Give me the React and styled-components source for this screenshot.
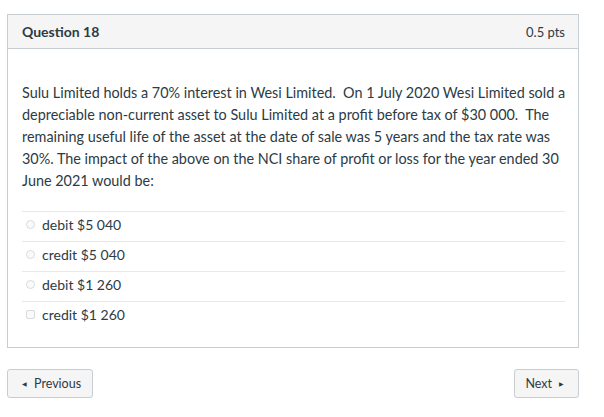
import React from 'react'
import styled, { createGlobalStyle } from 'styled-components'

const GlobalStyle = createGlobalStyle`
  html, body {
    margin: 0;
    padding: 0;
    background: #fff;
  }
  body {
    font-family: Lato, 'Open Sans', sans-serif;
    color: #2d3b45;
  }
`

const Page = styled.div`
  width: 604px;
  height: 417px;
  padding: 14px 25px 0 7px;
  box-sizing: border-box;
  display: flex;
  flex-direction: column;
`

const Card = styled.div`
  border: 1px solid #c7cdd1;
  background: #fff;
  display: flex;
  flex-direction: column;
`

const Header = styled.div`
  height: 33px;
  background: #f5f5f5;
  border-bottom: 1px solid #c7cdd1;
  display: flex;
  align-items: center;
  justify-content: space-between;
  padding: 0 13px 0 14px;
`

const Title = styled.h2`
  margin: 0;
  font-size: 14px;
  font-weight: 700;
  color: #2d3b45;
`

const Points = styled.span`
  font-size: 13px;
  color: #2d3b45;
`

const Body = styled.div`
  padding: 33px 13px 16px 14px;
`

const Text = styled.p`
  margin: 0 0 19px;
  font-size: 14.4px;
  line-height: 22px;
  white-space: nowrap;
  color: #2d3b45;
`

const Answers = styled.ul`
  list-style: none;
  margin: 0;
  padding: 0;
`

const Answer = styled.li`
  height: 30px;
  display: flex;
  align-items: center;
  border-top: 1px solid #e6e8ea;
  padding: 0 0 4px 4px;
  font-size: 14px;
  color: #2d3b45;
  box-sizing: border-box;
`

const Radio = styled.span`
  width: 7px;
  height: 7px;
  border: 1px solid #d8dbde;
  border-radius: ${(p) => (p.square ? '2px' : '50%')};
  margin-right: 7px;
  background: #fafafa;
`

const Footer = styled.div`
  display: flex;
  justify-content: space-between;
  margin-top: 21px;
`

const NavButton = styled.button`
  height: 29px;
  padding: ${(p) => p.pad};
  background: #f5f5f5;
  border: 1px solid #c7cdd1;
  border-radius: 3px;
  font-family: Lato, 'Open Sans', sans-serif;
  font-size: 12.5px;
  color: #2d3b45;
  display: flex;
  align-items: center;
  gap: 7px;
`

const Caret = styled.span`
  font-size: 6px;
  line-height: 1;
`

const answers = ['debit $5 040', 'credit $5 040', 'debit $1 260', 'credit $1 260']

export default function App() {
  return (
    <>
      <GlobalStyle />
      <Page>
        <Card>
          <Header>
            <Title>Question 18</Title>
            <Points>0.5 pts</Points>
          </Header>
          <Body>
            <Text>
              Sulu Limited holds a 70% interest in Wesi Limited.&nbsp; On 1 July 2020 Wesi Limited sold a
              <br />
              depreciable non-current asset to Sulu Limited at a profit before tax of $30 000.&nbsp; The
              <br />
              remaining useful life of the asset at the date of sale was 5 years and the tax rate was
              <br />
              30%. The impact of the above on the NCI share of profit or loss for the year ended 30
              <br />
              June 2021 would be:
            </Text>
            <Answers>
              {answers.map((a, i) => (
                <Answer key={a}>
                  <Radio square={i === 3} />
                  {a}
                </Answer>
              ))}
            </Answers>
          </Body>
        </Card>
        <Footer>
          <NavButton pad="0 11px 0 14px">
            <Caret>◀</Caret>Previous
          </NavButton>
          <NavButton pad="0 14px 0 10px">
            Next<Caret>▶</Caret>
          </NavButton>
        </Footer>
      </Page>
    </>
  )
}
